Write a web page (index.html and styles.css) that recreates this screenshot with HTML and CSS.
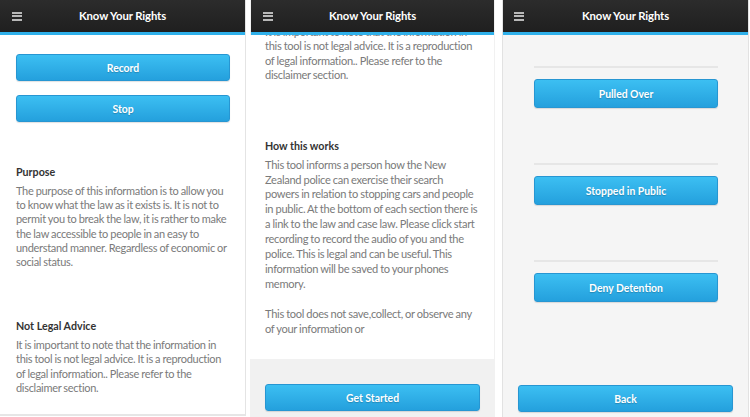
FILE: index.html
```html
<!DOCTYPE html>
<html lang="en">
<head>
<meta charset="utf-8">
<title>Know Your Rights</title>
<link rel="stylesheet" href="styles.css">
</head>
<body>
<div class="screens">
  <section class="phone phone-one">
    <header class="bar">
      <span class="menu"><i></i><i></i><i></i></span>
      <h1 class="title">Know Your Rights</h1>
    </header>
    <div class="content">
      <button class="btn">Record</button>
      <button class="btn btn-gap">Stop</button>
      <h2 class="heading h-purpose">Purpose</h2>
      <p class="text">The purpose of this information is to allow you to know what the law as it exists is. It is not to permit you to break the law, it is rather to make the law accessible to people in an easy to understand manner. Regardless of economic or social status.</p>
      <h2 class="heading h-legal">Not Legal Advice</h2>
      <p class="text">It is important to note that the information in this tool is not legal advice. It is a reproduction of legal information.. Please refer to the disclaimer section.</p>
    </div>
  </section>

  <section class="phone phone-two">
    <header class="bar">
      <span class="menu"><i></i><i></i><i></i></span>
      <h1 class="title">Know Your Rights</h1>
    </header>
    <div class="scroll">
      <div class="scroll-inner">
        <p class="text text-wide">It is important to note that the information in this tool is not legal advice. It is a reproduction of legal information.. Please refer to the disclaimer section.</p>
        <h2 class="heading h-how">How this works</h2>
        <p class="text text-wide text-loose">This tool informs a person how the New Zealand police can exercise their search powers in relation to stopping cars and people in public. At the bottom of each section there is a link to the law and case law. Please click start recording to record the audio of you and the police. This is legal and can be useful. This information will be saved to your phones memory.</p>
        <p class="text text-wide text-loose para">This tool does not save,collect, or observe any of your information or</p>
      </div>
    </div>
    <div class="footer">
      <button class="btn">Get Started</button>
    </div>
  </section>

  <section class="phone phone-three">
    <header class="bar">
      <span class="menu"><i></i><i></i><i></i></span>
      <h1 class="title">Know Your Rights</h1>
    </header>
    <div class="menu-list">
      <div class="item"><hr class="rule"><button class="btn btn-tall">Pulled Over</button></div>
      <div class="item"><hr class="rule"><button class="btn btn-tall">Stopped in Public</button></div>
      <div class="item"><hr class="rule"><button class="btn btn-tall">Deny Detention</button></div>
    </div>
    <div class="back-wrap">
      <button class="btn">Back</button>
    </div>
  </section>
</div>
</body>
</html>
```

FILE: styles.css
```css
* { box-sizing: border-box; }

html, body {
  margin: 0;
  padding: 0;
  width: 750px;
  height: 417px;
  overflow: hidden;
  background: #ffffff;
  font-family: "Lato", "Liberation Sans", sans-serif;
}

.screens {
  display: flex;
  height: 417px;
}

.phone {
  display: flex;
  flex-direction: column;
  height: 417px;
  overflow: hidden;
}

.phone-one {
  width: 246px;
  background: #ffffff;
  border-right: 1px solid #e4e4e4;
  border-bottom: 2px solid #e6e6e6;
  height: 416px;
}

.phone-two {
  width: 245px;
  margin-left: 4px;
  background: #f1f1f1;
}

.phone-three {
  width: 247px;
  margin-left: 7px;
  background: #f5f5f5;
  border-left: 1px solid #e2e2e2;
  border-right: 1px solid #e2e2e2;
}

.bar {
  position: relative;
  flex: none;
  height: 35px;
  background: linear-gradient(#2c2c2c, #1f1f1f);
  border-bottom: 3px solid #2fb0ea;
  display: flex;
  align-items: center;
  justify-content: center;
}

.phone-two .bar { margin-left: 1px; width: 243px; }
.phone-three .bar { margin-left: -1px; width: 247px; }

.menu {
  position: absolute;
  left: 12px;
  top: 12px;
  width: 10px;
  display: flex;
  flex-direction: column;
  gap: 1.6px;
}

.menu i {
  display: block;
  height: 1.8px;
  background: #b8b8b8;
}

.title {
  margin: 0 0 2px;
  font-size: 11.3px;
  font-weight: 700;
  color: #ffffff;
  letter-spacing: -0.1px;
}

.btn {
  display: block;
  width: 100%;
  height: 27px;
  padding: 0;
  border: 1px solid #2796d2;
  border-radius: 3px;
  background: linear-gradient(#3cbff2, #24a0dd);
  color: #ffffff;
  font-family: "Lato", "Liberation Sans", sans-serif;
  font-size: 10.4px;
  font-weight: 700;
  text-shadow: 0 1px 1px rgba(0, 0, 0, 0.2);
  box-shadow: 0 1px 1px rgba(0, 0, 0, 0.12);
}

.btn-gap { margin-top: 14px; }
.btn-tall { height: 29px; }

.content {
  padding: 19px 15px 0 16px;
}

.heading {
  margin: 0;
  font-size: 10.7px;
  line-height: 15px;
  font-weight: 700;
  color: #333333;
}

.h-purpose { margin-top: 42px; }
.h-legal { margin-top: 49px; }
.h-how { margin-top: 55px; }

.text {
  margin: 5px 0 0;
  font-size: 11px;
  letter-spacing: -0.3px;
  word-spacing: -0.3px;
  line-height: 14.2px;
  color: #7a7a7a;
}

.text-wide {
  font-size: 11.1px;
  line-height: 14.4px;
}

.text-loose { line-height: 14.9px; }

.para { margin-top: 15px; }

.scroll {
  height: 324px;
  flex: none;
  background: #ffffff;
  overflow: hidden;
  margin-right: 1px;
}

.scroll-inner {
  padding: 0 15px;
  margin-top: -10px;
}

.scroll-inner > .text:first-child { margin-top: 0; }

.footer {
  flex: 1;
  padding: 25px 15px 0;
}

.menu-list {
  padding: 31px 30px 0 31px;
  display: flex;
  flex-direction: column;
  gap: 55px;
}

.rule {
  margin: 0 0 11px;
  border: 0;
  height: 2px;
  background: #e6e6e6;
}

.back-wrap {
  margin-top: auto;
  padding: 0 15px 5px 15px;
}
```
